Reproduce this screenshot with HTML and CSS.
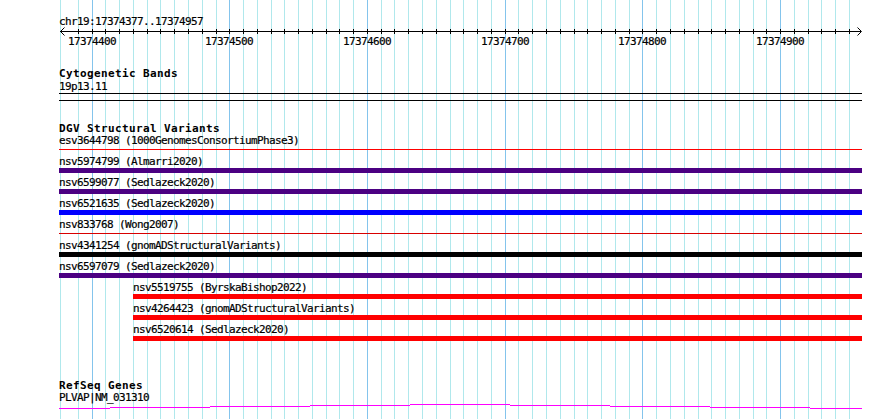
FILE: index.html
```html
<!DOCTYPE html>
<html lang="en">
<head>
<meta charset="utf-8">
<title>chr19:17374377..17374957</title>
<link rel="stylesheet" href="styles.css">
</head>
<body>
<div class="page">
  <svg class="grid" width="890" height="419" viewBox="0 0 890 419" aria-hidden="true">
    <g class="minor">
      <rect x="60" y="0" width="1" height="419"/><rect x="78" y="0" width="1" height="419"/>
      <rect x="105" y="0" width="1" height="419"/><rect x="119" y="0" width="1" height="419"/>
      <rect x="133" y="0" width="1" height="419"/><rect x="147" y="0" width="1" height="419"/>
      <rect x="160" y="0" width="1" height="419"/><rect x="174" y="0" width="1" height="419"/>
      <rect x="188" y="0" width="1" height="419"/><rect x="202" y="0" width="1" height="419"/>
      <rect x="216" y="0" width="1" height="419"/><rect x="243" y="0" width="1" height="419"/>
      <rect x="257" y="0" width="1" height="419"/><rect x="271" y="0" width="1" height="419"/>
      <rect x="284" y="0" width="1" height="419"/><rect x="298" y="0" width="1" height="419"/>
      <rect x="312" y="0" width="1" height="419"/><rect x="326" y="0" width="1" height="419"/>
      <rect x="339" y="0" width="1" height="419"/><rect x="353" y="0" width="1" height="419"/>
      <rect x="381" y="0" width="1" height="419"/><rect x="394" y="0" width="1" height="419"/>
      <rect x="408" y="0" width="1" height="419"/><rect x="422" y="0" width="1" height="419"/>
      <rect x="436" y="0" width="1" height="419"/><rect x="450" y="0" width="1" height="419"/>
      <rect x="463" y="0" width="1" height="419"/><rect x="477" y="0" width="1" height="419"/>
      <rect x="491" y="0" width="1" height="419"/><rect x="518" y="0" width="1" height="419"/>
      <rect x="532" y="0" width="1" height="419"/><rect x="546" y="0" width="1" height="419"/>
      <rect x="560" y="0" width="1" height="419"/><rect x="574" y="0" width="1" height="419"/>
      <rect x="587" y="0" width="1" height="419"/><rect x="601" y="0" width="1" height="419"/>
      <rect x="615" y="0" width="1" height="419"/><rect x="629" y="0" width="1" height="419"/>
      <rect x="656" y="0" width="1" height="419"/><rect x="670" y="0" width="1" height="419"/>
      <rect x="684" y="0" width="1" height="419"/><rect x="698" y="0" width="1" height="419"/>
      <rect x="711" y="0" width="1" height="419"/><rect x="725" y="0" width="1" height="419"/>
      <rect x="739" y="0" width="1" height="419"/><rect x="753" y="0" width="1" height="419"/>
      <rect x="766" y="0" width="1" height="419"/><rect x="794" y="0" width="1" height="419"/>
      <rect x="808" y="0" width="1" height="419"/><rect x="821" y="0" width="1" height="419"/>
      <rect x="835" y="0" width="1" height="419"/><rect x="849" y="0" width="1" height="419"/>
    </g>
    <g class="major">
      <rect x="92" y="0" width="1" height="419"/><rect x="229" y="0" width="1" height="419"/>
      <rect x="367" y="0" width="1" height="419"/><rect x="505" y="0" width="1" height="419"/>
      <rect x="642" y="0" width="1" height="419"/><rect x="780" y="0" width="1" height="419"/>
    </g>
  </svg>

  <div class="panel">
    <div class="locus">chr19:17374377..17374957</div>

    <svg class="ruler" width="803" height="20" viewBox="59 28 803 20">
      <rect class="axis" x="60" y="31" width="801" height="1"/>
      <g class="ticks">
        <rect x="78" y="29" width="1" height="5"/><rect x="92" y="29" width="1" height="5"/>
        <rect x="105" y="29" width="1" height="5"/><rect x="119" y="29" width="1" height="5"/>
        <rect x="133" y="29" width="1" height="5"/><rect x="147" y="29" width="1" height="5"/>
        <rect x="160" y="29" width="1" height="5"/><rect x="174" y="29" width="1" height="5"/>
        <rect x="188" y="29" width="1" height="5"/><rect x="202" y="29" width="1" height="5"/>
        <rect x="216" y="29" width="1" height="5"/><rect x="229" y="29" width="1" height="5"/>
        <rect x="243" y="29" width="1" height="5"/><rect x="257" y="29" width="1" height="5"/>
        <rect x="271" y="29" width="1" height="5"/><rect x="284" y="29" width="1" height="5"/>
        <rect x="298" y="29" width="1" height="5"/><rect x="312" y="29" width="1" height="5"/>
        <rect x="326" y="29" width="1" height="5"/><rect x="339" y="29" width="1" height="5"/>
        <rect x="353" y="29" width="1" height="5"/><rect x="367" y="29" width="1" height="5"/>
        <rect x="381" y="29" width="1" height="5"/><rect x="394" y="29" width="1" height="5"/>
        <rect x="408" y="29" width="1" height="5"/><rect x="422" y="29" width="1" height="5"/>
        <rect x="436" y="29" width="1" height="5"/><rect x="450" y="29" width="1" height="5"/>
        <rect x="463" y="29" width="1" height="5"/><rect x="477" y="29" width="1" height="5"/>
        <rect x="491" y="29" width="1" height="5"/><rect x="505" y="29" width="1" height="5"/>
        <rect x="518" y="29" width="1" height="5"/><rect x="532" y="29" width="1" height="5"/>
        <rect x="546" y="29" width="1" height="5"/><rect x="560" y="29" width="1" height="5"/>
        <rect x="574" y="29" width="1" height="5"/><rect x="587" y="29" width="1" height="5"/>
        <rect x="601" y="29" width="1" height="5"/><rect x="615" y="29" width="1" height="5"/>
        <rect x="629" y="29" width="1" height="5"/><rect x="642" y="29" width="1" height="5"/>
        <rect x="656" y="29" width="1" height="5"/><rect x="670" y="29" width="1" height="5"/>
        <rect x="684" y="29" width="1" height="5"/><rect x="698" y="29" width="1" height="5"/>
        <rect x="711" y="29" width="1" height="5"/><rect x="725" y="29" width="1" height="5"/>
        <rect x="739" y="29" width="1" height="5"/><rect x="753" y="29" width="1" height="5"/>
        <rect x="766" y="29" width="1" height="5"/><rect x="780" y="29" width="1" height="5"/>
        <rect x="794" y="29" width="1" height="5"/><rect x="808" y="29" width="1" height="5"/>
        <rect x="821" y="29" width="1" height="5"/><rect x="835" y="29" width="1" height="5"/>
        <rect x="849" y="29" width="1" height="5"/>
      </g>
      <path class="arrow" d="M64.5 27.5 L60.5 31.5 L64.5 35.5"/>
      <path class="arrow" d="M857.5 27.5 L861.5 31.5 L857.5 35.5"/>
      <text x="92" y="45">17374400</text>
      <text x="229" y="45">17374500</text>
      <text x="367" y="45">17374600</text>
      <text x="505" y="45">17374700</text>
      <text x="642" y="45">17374800</text>
      <text x="780" y="45">17374900</text>
    </svg>

    <section class="track cyto">
      <h2 class="title">Cytogenetic Bands</h2>
      <div class="label">19p13.11</div>
      <div class="band"></div>
    </section>

    <section class="track dgv">
      <h2 class="title">DGV Structural Variants</h2>
      <div class="feat"><div class="label">esv3644798 (1000GenomesConsortiumPhase3)</div><div class="glyph thin red"></div></div>
      <div class="feat"><div class="label">nsv5974799 (Almarri2020)</div><div class="glyph indigo"></div></div>
      <div class="feat"><div class="label">nsv6599077 (Sedlazeck2020)</div><div class="glyph indigo"></div></div>
      <div class="feat"><div class="label">nsv6521635 (Sedlazeck2020)</div><div class="glyph blue"></div></div>
      <div class="feat"><div class="label">nsv833768 (Wong2007)</div><div class="glyph thin darkred"></div></div>
      <div class="feat"><div class="label">nsv4341254 (gnomADStructuralVariants)</div><div class="glyph black"></div></div>
      <div class="feat"><div class="label">nsv6597079 (Sedlazeck2020)</div><div class="glyph indigo"></div></div>
      <div class="feat indent"><div class="label">nsv5519755 (ByrskaBishop2022)</div><div class="glyph red"></div></div>
      <div class="feat indent"><div class="label">nsv4264423 (gnomADStructuralVariants)</div><div class="glyph red"></div></div>
      <div class="feat indent"><div class="label">nsv6520614 (Sedlazeck2020)</div><div class="glyph red"></div></div>
    </section>

    <section class="track refseq">
      <h2 class="title">RefSeq Genes</h2>
      <div class="label">PLVAP|NM_031310</div>
      <svg class="gene" width="803" height="6" viewBox="59 404 803 6">
        <rect x="59" y="408" width="51" height="1"/>
        <rect x="110" y="407" width="100" height="1"/>
        <rect x="210" y="406" width="100" height="1"/>
        <rect x="310" y="405" width="100" height="1"/>
        <rect x="410" y="404" width="100" height="1"/>
        <rect x="510" y="405" width="100" height="1"/>
        <rect x="610" y="406" width="100" height="1"/>
        <rect x="710" y="407" width="100" height="1"/>
        <rect x="810" y="408" width="52" height="1"/>
      </svg>
    </section>
  </div>
</div>
</body>
</html>
```
FILE: styles.css
```css
html, body {
  margin: 0;
  background: #ffffff;
}

.page {
  position: relative;
  width: 890px;
  height: 419px;
  overflow: hidden;
  background: #ffffff;
  color: #000000;
  font-family: "DejaVu Sans Mono", "Liberation Mono", monospace;
  font-size: 11px;
  line-height: 13px;
  letter-spacing: -0.62px;
  -webkit-text-stroke: 0.2px #000000;
}

.grid {
  position: absolute;
  left: 0;
  top: 0;
  z-index: 0;
  shape-rendering: crispEdges;
}

.grid .minor {
  fill: #b0e8ec;
}

.grid .major {
  fill: #84c4ec;
}

.panel {
  position: relative;
  z-index: 1;
  width: 803px;
  margin-left: 59px;
  padding-top: 15px;
}

.locus {
  height: 13px;
  white-space: pre;
}

.ruler {
  display: block;
  overflow: visible;
  shape-rendering: crispEdges;
}

.ruler .axis,
.ruler .ticks {
  fill: #000000;
}

.ruler .arrow {
  fill: none;
  stroke: #000000;
  stroke-width: 1;
  shape-rendering: auto;
}

.ruler text {
  font-family: "DejaVu Sans Mono", "Liberation Mono", monospace;
  font-size: 11px;
  letter-spacing: -0.62px;
  text-anchor: middle;
  fill: #000000;
  stroke: #000000;
  stroke-width: 0.2px;
}

.track {
  display: block;
}

.title {
  margin: 0;
  height: 13px;
  font-size: 11px;
  font-weight: bold;
  line-height: 13px;
  letter-spacing: 0.38px;
  white-space: pre;
  -webkit-text-stroke: 0;
}

.label {
  height: 13px;
  white-space: pre;
}

.cyto {
  margin-top: 19px;
}

.band {
  height: 6px;
  border-top: 1px solid #000000;
  border-bottom: 1px solid #000000;
}

.dgv {
  margin-top: 21px;
}

.dgv .title {
  margin-bottom: -1px;
}

.feat {
  height: 21px;
}

.feat.indent {
  padding-left: 74px;
}

.glyph {
  height: 5px;
}

.glyph.thin {
  height: 1px;
  margin-top: 2px;
}

.red {
  background: #ff0000;
}

.darkred {
  background: #d80000;
}

.indigo {
  background: #4b0082;
}

.blue {
  background: #0000ff;
}

.black {
  background: #000000;
}

.refseq {
  margin-top: 36px;
}

.refseq .title {
  height: 12px;
  line-height: 12px;
}

.refseq .label {
  height: 12px;
  line-height: 12px;
}

.gene {
  display: block;
  fill: #ff00ff;
  shape-rendering: crispEdges;
}
```
